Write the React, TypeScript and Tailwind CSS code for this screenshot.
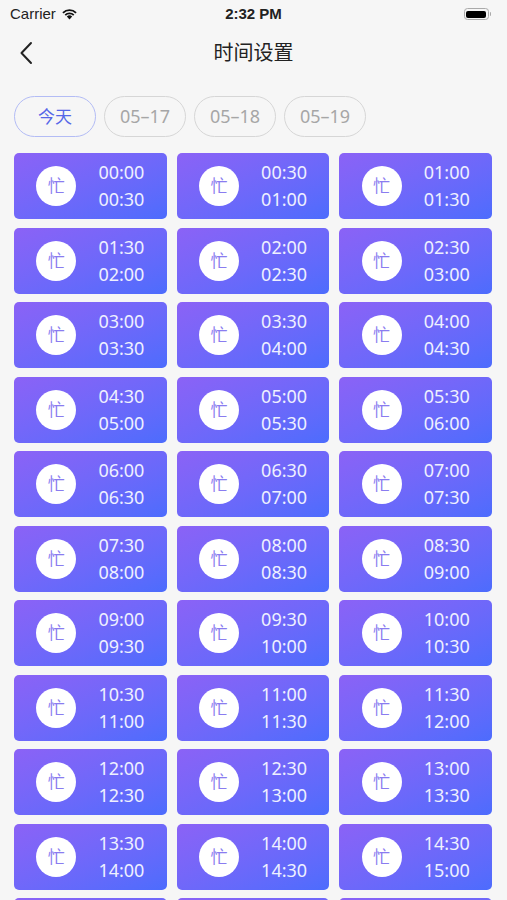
import React from "react";

const fmt = (m: number) => {
  const h = Math.floor(m / 60);
  const mm = m % 60;
  return `${String(h).padStart(2, "0")}:${String(mm).padStart(2, "0")}`;
};

const slots = Array.from({ length: 33 }, (_, i) => ({
  start: fmt(i * 30),
  end: fmt((i + 1) * 30),
}));

const dates = ["05-17", "05-18", "05-19"];

export default function App() {
  return (
    <div
      className="w-[507px] h-[900px] overflow-hidden bg-[#f6f6f6] text-black"
      style={{ fontFamily: '"Noto Sans", "Noto Sans CJK SC", sans-serif' }}
    >
      {/* status bar */}
      <div className="relative h-[28px] flex items-center px-[10px]">
        <div className="flex items-center gap-[5px]">
          <span className="text-[15px] text-[#222]" style={{ fontFamily: '"Liberation Sans", Arial, sans-serif' }}>Carrier</span>
          <svg width="17" height="12" viewBox="0 0 17 12">
            <path d="M8.5 11.5 L5.8 8.6 A3.9 3.9 0 0 1 11.2 8.6 Z" fill="#111" />
            <path d="M3.6 6.5 A7 7 0 0 1 13.4 6.5 L12.1 7.8 A5.2 5.2 0 0 0 4.9 7.8 Z" fill="#111" />
            <path d="M1.3 4.2 A10.3 10.3 0 0 1 15.7 4.2 L14.4 5.5 A8.4 8.4 0 0 0 2.6 5.5 Z" fill="#111" />
          </svg>
        </div>
        <div
          className="absolute left-0 right-0 top-0 h-[28px] flex items-center justify-center text-[15px] font-bold text-[#222]"
          style={{ fontFamily: '"Liberation Sans", Arial, sans-serif' }}
        >
          2:32 PM
        </div>
        <div className="ml-auto flex items-center mr-[6px]">
          <div className="w-[25px] h-[12px] rounded-[3.5px] border border-[#aaa] p-[1.5px]">
            <div className="w-full h-full rounded-[2px] bg-black" />
          </div>
          <div className="w-[1.5px] h-[4px] bg-[#aaa] rounded-r-sm ml-[1px]" />
        </div>
      </div>

      {/* nav bar */}
      <div className="relative h-[50px] flex items-center">
        <div className="pl-[19px]">
          <svg width="14" height="24" viewBox="0 0 14 24">
            <path d="M12 2 L2.5 12 L12 22" stroke="#222" strokeWidth="2" fill="none" strokeLinecap="round" strokeLinejoin="round" />
          </svg>
        </div>
        <div className="absolute inset-0 flex items-center justify-center text-[20px] text-[#222]">
          时间设置
        </div>
      </div>

      {/* date chips */}
      <div className="flex gap-[8px] px-[14px] pt-[18px]">
        <div className="w-[82px] h-[41px] rounded-full border border-[#b3bcf5] flex items-center justify-center text-[17px] text-[#5566e8]">
          今天
        </div>
        {dates.map((d) => (
          <div
            key={d}
            className="w-[82px] h-[41px] rounded-full border border-[#d6d6d6] flex items-center justify-center text-[18px] text-[#a6a6a6]"
          >
            {d.replace("-", "–")}
          </div>
        ))}
      </div>

      {/* grid */}
      <div className="grid grid-cols-3 gap-x-[10px] gap-y-[8.5px] px-[14px] pt-[16px] w-[506px]">
        {slots.map((s, i) => (
          <div
            key={i}
            className="h-[66px] rounded-[5px] bg-gradient-to-br from-[#8b62f6] to-[#4c6cfd] flex items-center justify-evenly"
          >
            <div className="w-[40px] h-[40px] rounded-full bg-white flex items-center justify-center text-[17px] text-[#8a7cf0]">
              忙
            </div>
            <div className="flex flex-col text-[18px] leading-[27px] text-[#eef0ff]">
              <span>{s.start}</span>
              <span>{s.end}</span>
            </div>
          </div>
        ))}
      </div>
    </div>
  );
}
